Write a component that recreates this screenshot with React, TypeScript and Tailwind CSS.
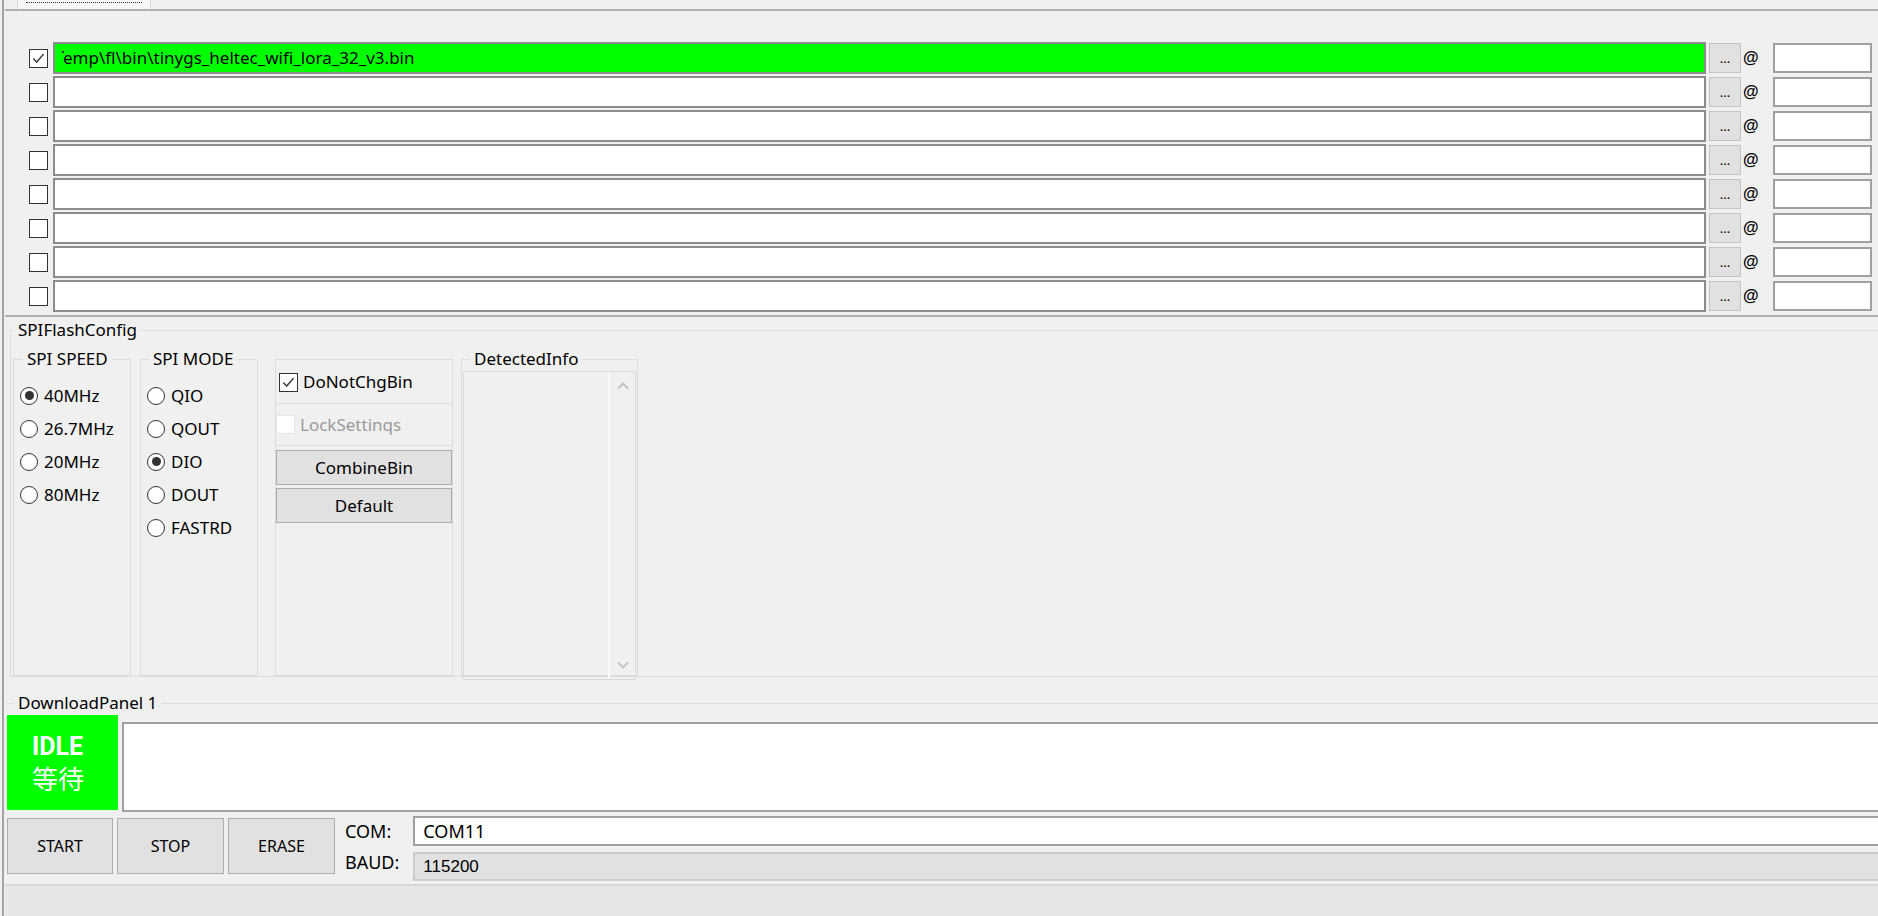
import React from "react";

const FILES = [
  "emp\\fl\\bin\\tinygs_heltec_wifi_lora_32_v3.bin",
  "",
  "",
  "",
  "",
  "",
  "",
  "",
];

function Check({ checked, disabled }: { checked?: boolean; disabled?: boolean }) {
  return (
    <span
      className={
        disabled
          ? "flex h-[19px] w-[19px] shrink-0 items-center justify-center border border-[#e6e6e6] bg-white"
          : "flex h-[19px] w-[19px] shrink-0 items-center justify-center border border-[#333333] bg-white"
      }
    >
      {checked && (
        <svg width="15" height="15" viewBox="0 0 15 15">
          <path d="M2.3 7.6l3.4 3.5 6.9-8" fill="none" stroke="#444" strokeWidth="1.5" />
        </svg>
      )}
    </span>
  );
}

function Radio({ label, on }: { label: string; on?: boolean }) {
  return (
    <div className="flex h-[33px] items-center">
      <span className="flex h-[18px] w-[18px] shrink-0 items-center justify-center rounded-full border border-[#333333] bg-white">
        {on && <span className="h-[9px] w-[9px] rounded-full bg-[#333333]" />}
      </span>
      <span className="ml-[6px] leading-[20px]">{label}</span>
    </div>
  );
}

function FileRow({ path, checked }: { path: string; checked?: boolean }) {
  return (
    <div className="flex h-[32px] items-center pl-[24px] pr-[6px]">
      <Check checked={checked} />
      <div
        className={
          path
            ? "ml-[5px] flex h-[32px] min-w-0 flex-1 items-center border-2 border-[#8c8c8c] bg-[#00ff00] pl-[7px]"
            : "ml-[5px] flex h-[32px] min-w-0 flex-1 items-center border-2 border-[#8c8c8c] bg-white pl-[7px]"
        }
      >
        {path && (
          <span className="flex items-start whitespace-nowrap leading-[20px]">
            <span className="mr-[-1px] mt-[3px] h-[2px] w-[2px] bg-[#333]" />
            {path}
          </span>
        )}
      </div>
      <button className="ml-[3px] flex h-[30px] w-[32px] items-end justify-center border border-[#c4c4c4] bg-[#e1e1e1] pb-[7px] text-[13px] leading-none">
        ...
      </button>
      <span className="ml-[2px] w-[15px] font-['Liberation_Sans',sans-serif] text-[16px] font-bold leading-none">@</span>
      <div className="ml-[15px] h-[30px] w-[99px] border-2 border-[#a0a0a0] bg-white" />
    </div>
  );
}

function WinButton({ label, className }: { label: string; className: string }) {
  return (
    <button className={`flex items-center justify-center border border-[#adadad] bg-[#e1e1e1] leading-[20px] ${className}`}>
      {label}
    </button>
  );
}

export default function App() {
  return (
    <div className="flex h-[916px] w-[1878px] overflow-hidden bg-[#f0f0f0] font-['Noto_Sans',sans-serif] text-[17px] text-black">
      {/* window edge */}
      <div className="flex w-[5px] shrink-0">
        <div className="ml-[2px] w-[2px] bg-[#a3a3a3]" />
      </div>

      <div className="flex min-w-0 flex-1 flex-col">
        {/* tab strip */}
        <div className="flex h-[9px] shrink-0">
          <div className="ml-[12px] flex h-[9px] w-[134px] flex-col border-x border-[#d9d9d9] bg-[#f7f7f7] px-[8px]">
            <div className="mt-[2px] border-t border-dotted border-[#333]" />
          </div>
        </div>

        {/* file list */}
        <div className="flex h-[308px] shrink-0 flex-col gap-[2px] border-y-2 border-[#b0b0b0] pt-[31px]">
          {FILES.map((f, i) => (
            <FileRow key={i} path={f} checked={i === 0} />
          ))}
        </div>

        {/* SPIFlashConfig */}
        <fieldset className="ml-[5px] mt-[2px] h-[358px] shrink-0 border border-r-0 border-[#dcdcdc]">
          <legend className="ml-[3px] px-[4px] leading-[22px]">SPIFlashConfig</legend>
          <div className="mt-[7px] flex items-start pl-[2px]">
            <fieldset className="h-[328px] w-[118px] border border-[#dcdcdc] pl-[6px]">
              <legend className="ml-[3px] px-[4px] leading-[22px]">SPI SPEED</legend>
              <div className="pt-[9px]">
                <Radio label="40MHz" on />
                <Radio label="26.7MHz" />
                <Radio label="20MHz" />
                <Radio label="80MHz" />
              </div>
            </fieldset>

            <fieldset className="ml-[9px] h-[328px] w-[118px] border border-[#dcdcdc] pl-[6px]">
              <legend className="ml-[2px] px-[4px] leading-[22px]">SPI MODE</legend>
              <div className="pt-[9px]">
                <Radio label="QIO" />
                <Radio label="QOUT" />
                <Radio label="DIO" on />
                <Radio label="DOUT" />
                <Radio label="FASTRD" />
              </div>
            </fieldset>

            <div className="ml-[17px] mt-[11px] flex h-[317px] w-[178px] flex-col border border-[#dcdcdc]">
              <div className="mt-[12px] flex items-center pl-[3px]">
                <Check checked />
                <span className="ml-[5px] leading-[20px]">DoNotChgBin</span>
              </div>
              <div className="mx-[-1px] mt-[11px] flex h-[43px] items-center border border-[#dcdcdc]">
                <Check disabled />
                <span className="ml-[5px] leading-[20px] text-[#9a9a9a]">LockSettinqs</span>
              </div>
              <WinButton label="CombineBin" className="mt-[4px] h-[35px] w-full" />
              <WinButton label="Default" className="mt-[3px] h-[35px] w-full" />
            </div>

            <fieldset className="ml-[8px] h-[328px] w-[177px] border border-[#dcdcdc] px-[1px]">
              <legend className="ml-[7px] px-[4px] leading-[22px]">DetectedInfo</legend>
              <div className="mt-[1px] flex h-[309px] border border-[#dadada]">
                <div className="flex-1" />
                <div className="flex w-[27px] flex-col items-center justify-between border-l-2 border-[#fafafa] py-[10px]">
                  <svg width="12" height="8" viewBox="0 0 12 8">
                    <path d="M1 6.5L6 1.5l5 5" fill="none" stroke="#c2c2c2" strokeWidth="1.8" />
                  </svg>
                  <svg width="12" height="8" viewBox="0 0 12 8">
                    <path d="M1 1.5l5 5 5-5" fill="none" stroke="#c2c2c2" strokeWidth="1.8" />
                  </svg>
                </div>
              </div>
            </fieldset>
          </div>
        </fieldset>

        {/* DownloadPanel 1 */}
        <fieldset className="ml-[2px] mt-[15px] shrink-0 border-t border-[#dcdcdc]">
          <legend className="ml-[7px] px-[4px] leading-[22px]">DownloadPanel 1</legend>
          <div className="flex h-[98px] items-start">
            <div className="mt-[1px] flex h-[95px] w-[111px] flex-col bg-[#00ff00] pl-[25px] pt-[20px] text-white">
              <span className="font-['Roboto',sans-serif] text-[25px] font-bold leading-[24px]">IDLE</span>
              <span className="mt-[5px] font-['Noto_Sans_CJK_SC',sans-serif] text-[26px] leading-[28px]">等待</span>
            </div>
            <div className="ml-[4px] mt-[8px] h-[90px] flex-1 border-2 border-r-0 border-[#a0a0a0] bg-white" />
          </div>
          <div className="mt-[4px] flex items-start">
            <WinButton label="START" className="mt-[2px] h-[56px] w-[106px] text-[16px]" />
            <WinButton label="STOP" className="ml-[4px] mt-[2px] h-[56px] w-[107px] text-[16px]" />
            <WinButton label="ERASE" className="ml-[4px] mt-[2px] h-[56px] w-[107px] text-[16px]" />
            <div className="ml-[10px] flex flex-col pt-[5px] text-[18px] leading-[20px]">
              <span className="h-[31px]">COM:</span>
              <span>BAUD:</span>
            </div>
            <div className="ml-[14px] flex flex-1 flex-col">
              <div className="flex h-[30px] items-center border-2 border-r-0 border-[#a0a0a0] bg-white pl-[8px] text-[18px] leading-[20px]">
                COM11
              </div>
              <div className="mt-[6px] flex h-[29px] items-end border-2 border-r-0 border-[#cccccc] bg-[#e1e1e1] pb-[2px] pl-[8px] font-['Liberation_Sans',sans-serif] text-[17px] leading-[20px]">
                115200
              </div>
            </div>
          </div>
        </fieldset>

        {/* status bar */}
        <div className="mt-auto h-[32px] shrink-0 border-t-2 border-[#d6d6d6] bg-[#e6e6e6]" />
      </div>
    </div>
  );
}
